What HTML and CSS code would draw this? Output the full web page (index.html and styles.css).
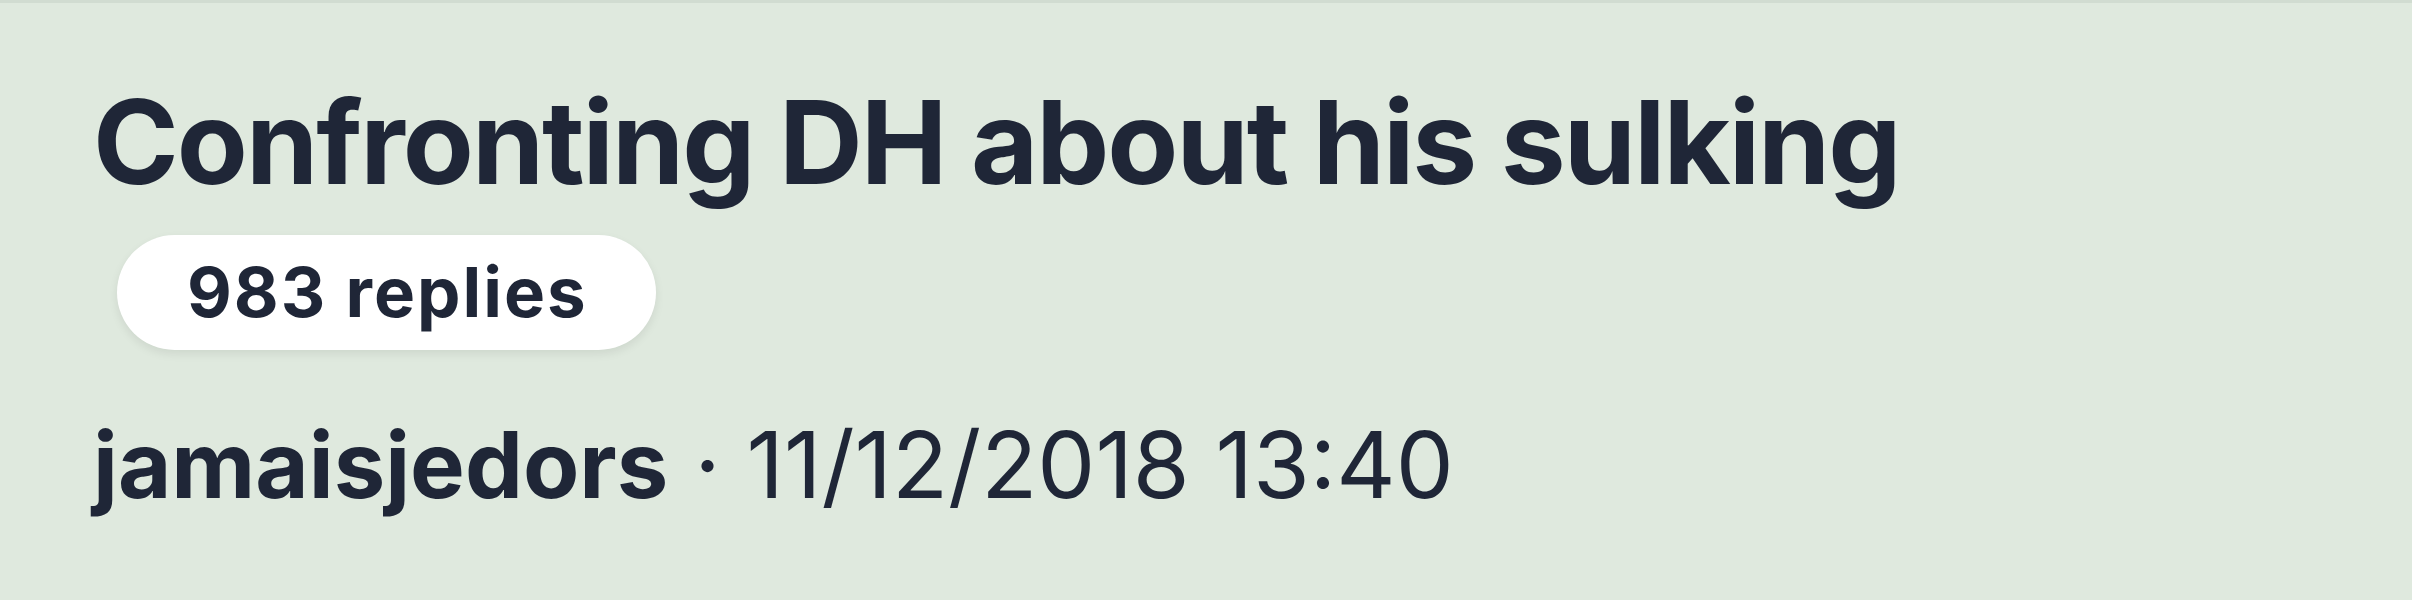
FILE: index.html
```html
<!DOCTYPE html>
<html lang="en">

<head>
    <meta charset="UTF-8">
    <title>Confronting DH about his sulking</title>
    <link rel="stylesheet" href="styles.css">
</head>

<body>
    <div class="thread">
        <h1 class="thread-title">Confronting DH about his sulking</h1>
        <div class="thread-count">983 replies</div>
        <p class="thread-meta"><span class="thread-author">jamaisjedors</span> · 11/12/2018 13:40</p>
    </div>
</body>

</html>
```

FILE: styles.css
```css
* {
    padding: 0;
    margin: 0;
}
body {
    background: #dfe9de;
    border-top: 3px solid #d1dcd1;
    font-family: Inter, "Liberation Sans", sans-serif;
    color: #1f2637;
}
.thread {
    display: flex;
    flex-direction: column;
    align-items: flex-start;
    padding: 69px 0 0 93px;
}
.thread-title {
    font-size: 116px;
    font-weight: 700;
    line-height: 140px;
    letter-spacing: -2px;
}
.thread-count {
    margin: 23px 0 0 24px;
    height: 115px;
    line-height: 115px;
    padding: 0 68px 0 70px;
    border-radius: 58px;
    background: #fff;
    box-shadow: 0 4px 10px rgba(0, 0, 0, 0.08);
    font-size: 69px;
    font-weight: 700;
    letter-spacing: 2px;
}
.thread-meta {
    margin-top: 59px;
    font-size: 92px;
    line-height: 111px;
    font-weight: 400;
}
.thread-author {
    font-weight: 700;
}
```
